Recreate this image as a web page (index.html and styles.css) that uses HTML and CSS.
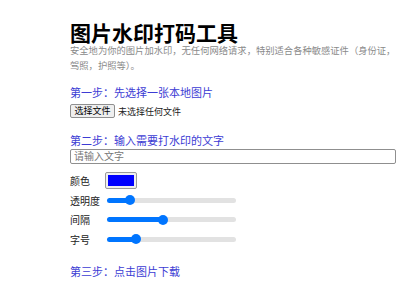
FILE: index.html
```html
<!DOCTYPE html>
<html lang="zh-CN">
<head>
  <meta charset="UTF-8">
  <title>图片水印打码工具</title>
  <link rel="stylesheet" href="styles.css">
</head>
<body>
  <div class="pagina">
    <h1>图片水印打码工具</h1>
    <p class="descricao">安全地为你的图片加水印，无任何网络请求，特别适合各种敏感证件（身份证，驾照，护照等）。</p>

    <h2 class="passo1">第一步：先选择一张本地图片</h2>
    <div class="arquivo">
      <button class="botaoArquivo">选择文件</button>
      <span>未选择任何文件</span>
    </div>

    <h2 class="passo2">第二步：输入需要打水印的文字</h2>
    <input class="texto" type="text" placeholder="请输入文字">

    <div class="opcoes">
      <label>颜色</label>
      <div class="cor"><span></span></div>
      <label>透明度</label>
      <input class="faixa" type="range" min="0" max="100" value="15" style="--v: 15">
      <label>间隔</label>
      <input class="faixa" type="range" min="0" max="100" value="43" style="--v: 43">
      <label>字号</label>
      <input class="faixa" type="range" min="0" max="100" value="20" style="--v: 20">
    </div>

    <h2 class="passo3">第三步：点击图片下载</h2>
  </div>
</body>
</html>
```

FILE: styles.css
```css
body {
  margin: 0;
  font-family: "Liberation Sans", "Noto Sans CJK SC", sans-serif;
  background: #fff;
  color: #222;
}
.pagina {
  padding: 24px 4px 0 70px;
}
h1 {
  margin: 0;
  font-size: 21px;
  line-height: 20px;
  font-weight: bold;
  color: #000;
}
.descricao {
  margin: 0;
  font-size: 9.3px;
  line-height: 14.5px;
  color: #8a8a8a;
}
h2 {
  margin: 0;
  font-size: 11px;
  line-height: 16px;
  font-weight: normal;
  color: #3c3cd4;
}
.passo1 {
  margin-top: 12px;
}
.arquivo {
  display: flex;
  align-items: center;
  gap: 3px;
  margin-top: 3px;
  font-size: 9px;
  color: #222;
}
.botaoArquivo {
  box-sizing: border-box;
  width: 45px;
  height: 14px;
  margin: 0;
  padding: 0;
  font-family: inherit;
  font-size: 9px;
  line-height: 12px;
  color: #000;
  background: #efefef;
  border: 1px solid #8f8f8f;
  border-radius: 2px;
}
.passo2 {
  margin-top: 15px;
}
.texto {
  display: block;
  box-sizing: border-box;
  width: 100%;
  height: 15px;
  margin: 0;
  padding: 0 3px;
  font-family: inherit;
  font-size: 10px;
  border: 1px solid #8f8f8f;
  border-radius: 2px;
}
.texto::placeholder {
  color: #777;
}
.opcoes {
  display: grid;
  grid-template-columns: 35px 135px;
  grid-auto-rows: 17px;
  align-items: center;
  row-gap: 2.5px;
  margin-top: 8px;
  font-size: 10px;
  color: #222;
}
.cor {
  box-sizing: border-box;
  width: 32px;
  height: 17px;
  padding: 2px;
  background: #efefef;
  border: 1px solid #9a9a9a;
  border-radius: 2px;
}
.cor span {
  display: block;
  height: 100%;
  background: #0000ff;
}
.faixa {
  -webkit-appearance: none;
  appearance: none;
  width: 129px;
  height: 10px;
  margin: 0 0 0 2px;
  background: transparent;
}
.faixa::-webkit-slider-runnable-track {
  height: 5px;
  border-radius: 3px;
  background: linear-gradient(to right, #0075ff 0, #0075ff calc(5px + (100% - 10px) * var(--v) / 100), #e2e2e2 calc(5px + (100% - 10px) * var(--v) / 100));
}
.faixa::-webkit-slider-thumb {
  -webkit-appearance: none;
  width: 10px;
  height: 10px;
  margin-top: -2.5px;
  border-radius: 50%;
  background: #0075ff;
  border: none;
}
.passo3 {
  margin-top: 16.5px;
}
```
